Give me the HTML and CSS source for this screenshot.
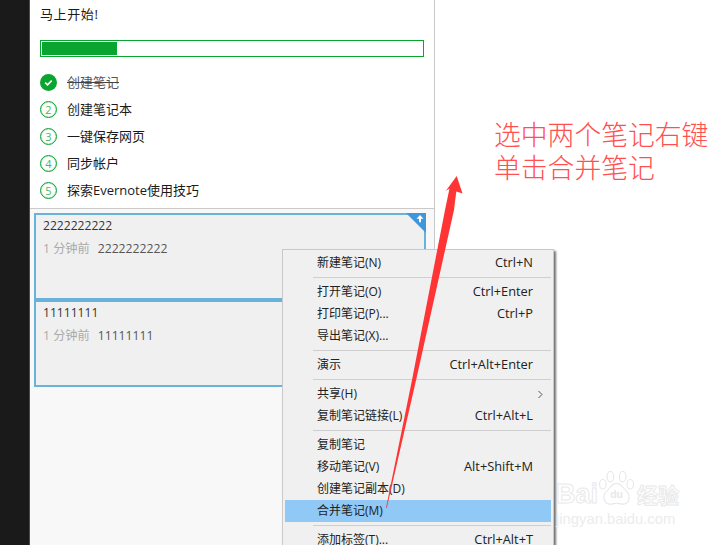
FILE: index.html
```html
<!DOCTYPE html>
<html lang="zh-CN">
<head>
<meta charset="utf-8">
<title>Evernote</title>
<link rel="stylesheet" href="styles.css">
</head>
<body>
<div class="app">
  <div class="rail"></div>
  <main class="panel">
    <section class="start">
      <h1 class="start-title">马上开始!</h1>
      <div class="progress"><div class="progress-fill"></div></div>
      <ol class="steps">
        <li class="step step-done">
          <svg class="check" viewBox="0 0 17 17" width="17" height="17"><circle cx="8.5" cy="8.5" r="8.5" fill="#0aa52f"/><path d="M5.2 8.6l2.3 2.2 4.2-4.2" fill="none" stroke="#fff" stroke-width="1.7"/></svg>
          <span class="step-text">创建笔记</span>
        </li>
        <li class="step"><span class="num">2</span><span class="step-text">创建笔记本</span></li>
        <li class="step"><span class="num">3</span><span class="step-text">一键保存网页</span></li>
        <li class="step"><span class="num">4</span><span class="step-text">同步帐户</span></li>
        <li class="step"><span class="num">5</span><span class="step-text">探索Evernote使用技巧</span></li>
      </ol>
    </section>
    <section class="notes">
      <article class="note">
        <h2 class="note-title">2222222222</h2>
        <p class="note-meta"><span class="note-time">1 分钟前</span><span>2222222222</span></p>
        <svg class="pin" viewBox="0 0 20 20" width="20" height="20"><path d="M0 0H20V20Z" fill="#3f97d9"/><path d="M14 2l-3.500 3.800h2.500v3.400h2V5.800h2.500z" fill="#fff"/></svg>
      </article>
      <article class="note">
        <h2 class="note-title">11111111</h2>
        <p class="note-meta"><span class="note-time">1 分钟前</span><span>11111111</span></p>
      </article>
    </section>
  </main>
</div>

<nav class="menu">
  <div class="item"><span>新建笔记(N)</span><span class="key">Ctrl+N</span></div>
  <div class="sep"></div>
  <div class="item"><span>打开笔记(O)</span><span class="key">Ctrl+Enter</span></div>
  <div class="item"><span>打印笔记(P)...</span><span class="key">Ctrl+P</span></div>
  <div class="item"><span>导出笔记(X)...</span></div>
  <div class="sep"></div>
  <div class="item"><span>演示</span><span class="key">Ctrl+Alt+Enter</span></div>
  <div class="sep"></div>
  <div class="item"><span>共享(H)</span><svg class="chev" viewBox="0 0 7 9" width="7" height="9"><path d="M1.5 1l3.5 3.5L1.5 8" fill="none" stroke="#555" stroke-width="1"/></svg></div>
  <div class="item"><span>复制笔记链接(L)</span><span class="key">Ctrl+Alt+L</span></div>
  <div class="sep"></div>
  <div class="item"><span>复制笔记</span></div>
  <div class="item"><span>移动笔记(V)</span><span class="key">Alt+Shift+M</span></div>
  <div class="item"><span>创建笔记副本(D)</span></div>
  <div class="item item-active"><span>合并笔记(M)</span></div>
  <div class="sep"></div>
  <div class="item"><span>添加标签(T)...</span><span class="key">Ctrl+Alt+T</span></div>
</nav>

<svg class="arrow" viewBox="0 0 723 545" width="723" height="545">
  <path d="M456.7 176L462.5 193.500L456.300 191.500L454 210L417 376L386.800 508L386 508L412 380L445 210L449.500 188.500L445.800 191Z" fill="#ff3535"/>
</svg>

<p class="annotation">选中两个笔记右键<br>单击合并笔记</p>

<div class="watermark">
  <div class="wm-row">
    <span class="wm-bai">Bai</span>
    <svg class="wm-paw" viewBox="0 0 40 38" width="40" height="36" fill="none" stroke="#e8e8e8" stroke-width="1.200">
      <ellipse cx="5" cy="14" rx="3.500" ry="5"/>
      <ellipse cx="13" cy="6" rx="3.500" ry="5.500"/>
      <ellipse cx="26" cy="6" rx="3.500" ry="5.500"/>
      <ellipse cx="34" cy="14" rx="3.500" ry="5"/>
      <path d="M19.500 13c-5 0-7 5-11 9-4 4-3 12 4 13 3 0 5-1 7-1s4 1 7 1c7-1 8-9 4-13-4-4-6-9-11-9z"/>
      <text x="19.500" y="29" text-anchor="middle" class="wm-du">du</text>
    </svg>
    <span class="wm-cn">经验</span>
  </div>
  <div class="wm-url">jingyan.baidu.com</div>
</div>
</body>
</html>
```
FILE: styles.css
```css
* { box-sizing: border-box; }
html, body { margin: 0; padding: 0; }
body {
  position: relative;
  width: 723px;
  height: 545px;
  overflow: hidden;
  background: #fff;
  font-family: "Open Sans", "Noto Sans CJK SC", sans-serif;
  font-size: 13px;
  color: #1a1a1a;
}
.app { display: flex; height: 545px; }
.rail {
  width: 30px;
  flex: none;
  background: #1a1a1a;
  border-right: 1px solid #4a4d50;
}
.panel {
  width: 405px;
  flex: none;
  display: flex;
  flex-direction: column;
  border-right: 1px solid #c8c8c8;
  background: #f8f8f8;
}
.start {
  background: #fff;
  height: 209px;
  padding: 4px 10px 0;
  border-bottom: 1px solid #cacaca;
}
.start-title {
  margin: 0;
  font-size: 13px;
  font-weight: 400;
  line-height: 20px;
  letter-spacing: .6px;
}
.progress {
  margin-top: 16px;
  width: 384px;
  height: 17px;
  padding: 1px;
  border: 1px solid #0aa52f;
}
.progress-fill { width: 75px; height: 13px; background: #0aa52f; }
.steps {
  list-style: none;
  margin: 12px 0 0;
  padding: 0;
}
.step {
  display: flex;
  align-items: center;
  height: 27px;
  gap: 10px;
  line-height: 27px;
}
.step-done .step-text {
  text-decoration: line-through 1px #444;
  color: #555;
}
.check { flex: none; display: block; }
.num {
  width: 17px;
  height: 17px;
  flex: none;
  border: 1px solid #0aa52f;
  border-radius: 50%;
  box-shadow: inset 0 0 1px #0aa52f;
  color: #45b862;
  font-size: 11px;
  line-height: 15px;
  text-align: center;
}
.notes { padding: 4px 8px 0 4px; }
.note {
  position: relative;
  width: 392px;
  height: 87px;
  padding: 2px 7px;
  border: 2px solid #69b3da;
  background: #f0f0f0;
}
.note-title {
  margin: 0;
  font-size: 12.100px;
  font-weight: 400;
  line-height: 17px;
  color: #333;
}
.note-meta {
  margin: 6px 0 0;
  line-height: 17px;
  font-size: 12.200px;
  color: #555;
}
.note-time { color: #aaa; margin-right: 8px; }
.pin { position: absolute; top: -2px; right: -2px; }

.menu {
  position: absolute;
  left: 282px;
  top: 249px;
  width: 272px;
  padding: 2px;
  background: #f0f0f0;
  border: 1px solid #c9c9c9;
  box-shadow: 2px 2px 2px rgba(0, 0, 0, .55);
  color: #222;
}
.item {
  display: flex;
  justify-content: space-between;
  align-items: center;
  height: 22px;
  padding: 0 18px 0 32px;
  line-height: 22px;
  white-space: nowrap;
  font-size: 12px;
}
.key { font-size: 12.800px; margin-bottom: 2px; }
.item-active { background: #90c8f6; }
.chev { margin-right: -11px; }
.sep {
  height: 1px;
  margin: 3px 0 3px 28px;
  background: #cfcfcf;
}

.arrow { position: absolute; left: 0; top: 0; pointer-events: none; }

.annotation {
  position: absolute;
  left: 494px;
  top: 117px;
  margin: 0;
  font-size: 26.800px;
  line-height: 33px;
  font-weight: 300;
  color: #ff5050;
  font-family: "Noto Sans CJK SC", sans-serif;
  white-space: nowrap;
}

.watermark {
  position: absolute;
  left: 556px;
  top: 470px;
}
.wm-row { display: flex; align-items: flex-end; height: 37px; }
.wm-bai {
  font: 700 27px/26px "Liberation Sans", sans-serif;
  width: 41px;
  color: transparent;
  -webkit-text-stroke: 1px #e9e9e9;
}
.wm-du { font: 700 11px "Liberation Sans", sans-serif; fill: #e8e8e8; stroke: none; }
.wm-paw { flex: none; }
.wm-cn {
  font: 700 21px/25px "Noto Sans CJK SC", sans-serif;
  color: transparent;
  -webkit-text-stroke: 1px #e9e9e9;
}
.wm-url {
  margin-top: 3px;
  font: 400 14.800px/18px "Liberation Sans", sans-serif;
  color: #ececec;
  white-space: nowrap;
}
```
